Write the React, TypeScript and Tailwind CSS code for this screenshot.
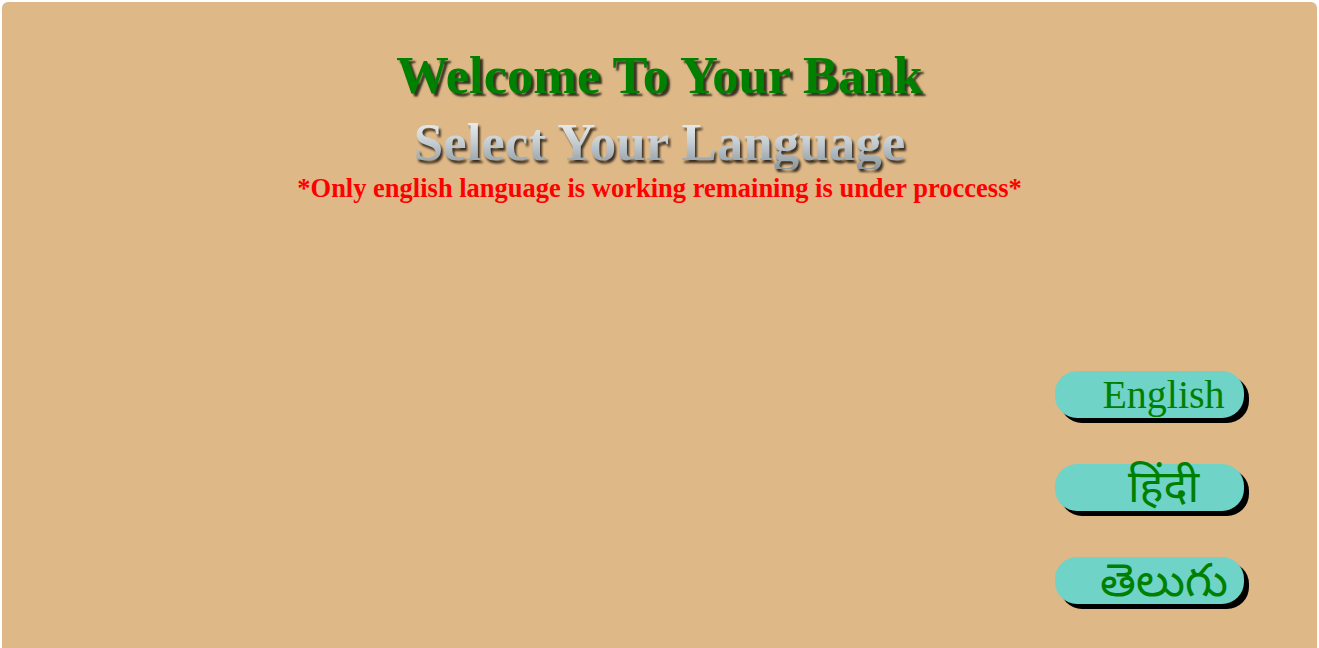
import React from "react";

const languages = [
  { label: "English", cls: "text-[40px]" },
  { label: "हिंदी", cls: "text-[45px]" },
  { label: "తెలుగు", cls: "text-[46px] font-light" },
];

const App: React.FC = () => {
  return (
    <div className="min-h-screen bg-white p-[2px] font-['Liberation_Serif',serif]">
      <div className="h-[660px] rounded-[6px] bg-[#deb887] flex flex-col items-center">
        {/* HEADER */}
        <h1 className="mt-[47px] text-[52.5px] leading-[53px] font-bold text-[#008000] [text-shadow:3px_3px_2px_#3a3322]">
          Welcome To Your Bank
        </h1>
        <h2 className="mt-[14px] text-[53px] leading-[53px] font-bold bg-gradient-to-b from-[#f4f6f7] via-[#c5cdd2] to-[#8a979f] bg-clip-text text-transparent drop-shadow-[2px_3px_1px_#3d3020]">
          Select Your Language
        </h2>
        <p className="mt-[4px] text-[26.5px] leading-[30px] font-bold text-[#ff0000]">
          *Only english language is working remaining is under proccess*
        </p>

        {/* LANGUAGE BUTTONS */}
        <div className="mt-[168px] self-end mr-[73px] flex flex-col gap-[46px]">
          {languages.map((lang) => (
            <button
              key={lang.label}
              className={`w-[189px] h-[47px] rounded-[22px] bg-[#6fd3c7] text-[#008000] pl-[28px] leading-[47px] shadow-[5px_5px_0_#000] font-['Liberation_Serif','Noto_Sans',serif] ${lang.cls}`}
            >
              {lang.label}
            </button>
          ))}
        </div>
      </div>
    </div>
  );
};

export default App;
